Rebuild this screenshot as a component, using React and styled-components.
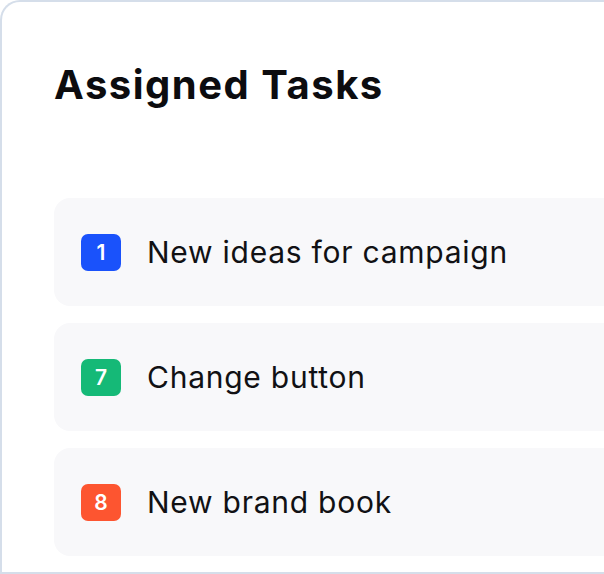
import React from "react";
import styled, { createGlobalStyle } from "styled-components";

const Global = createGlobalStyle`
  html, body { margin: 0; padding: 0; background: #ffffff; overflow: hidden; }
  body { font-family: Inter, "Noto Sans", sans-serif; }
`;

const Card = styled.section`
  box-sizing: border-box;
  width: 720px;
  height: 574px;
  background: #ffffff;
  border: 2px solid #d5deea;
  border-right: none;
  border-radius: 20px 0 0 0;
  padding: 55px 0 0 52px;
`;

const Title = styled.h1`
  margin: 0 0 85px 0;
  font-family: Inter, sans-serif;
  font-weight: 700;
  font-size: 40px;
  line-height: 56px;
  letter-spacing: 1.5px;
  color: #0c0c0f;
`;

const List = styled.ul`
  list-style: none;
  margin: 0;
  padding: 0;
  display: flex;
  flex-direction: column;
  gap: 17px;
`;

const Row = styled.li`
  box-sizing: border-box;
  height: 108px;
  display: flex;
  align-items: center;
  gap: 26px;
  padding-left: 27px;
  background: #f8f8fa;
  border-radius: 16px 0 0 16px;
`;

const Badge = styled.span`
  width: 40px;
  height: 37px;
  border-radius: 7px;
  background: ${(p) => p.$color};
  color: #ffffff;
  display: flex;
  align-items: center;
  justify-content: center;
  font-family: Inter, sans-serif;
  font-weight: 600;
  font-size: 21px;
`;

const Label = styled.span`
  font-family: Inter, sans-serif;
  font-weight: 400;
  font-size: 30px;
  color: #111114;
  letter-spacing: 0.75px;
`;

const tasks = [
  { n: 1, color: "#1a52fb", text: "New ideas for campaign" },
  { n: 7, color: "#15b977", text: "Change button" },
  { n: 8, color: "#fd5530", text: "New brand book" },
];

export default function App() {
  return (
    <>
      <Global />
      <Card>
        <Title>Assigned Tasks</Title>
        <List>
          {tasks.map((t) => (
            <Row key={t.n}>
              <Badge $color={t.color}>{t.n}</Badge>
              <Label>{t.text}</Label>
            </Row>
          ))}
        </List>
      </Card>
    </>
  );
}
